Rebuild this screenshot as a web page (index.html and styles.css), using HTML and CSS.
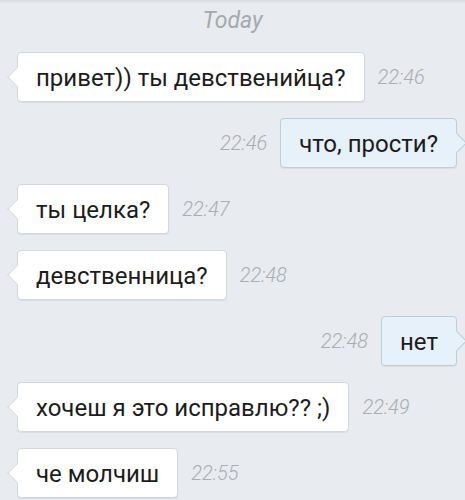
FILE: index.html
```html
<!DOCTYPE html>
<html lang="ru">
<head>
    <meta charset="UTF-8">
    <meta name="viewport" content="width=device-width, initial-scale=1.0">
    <title>Чат</title>
    <link rel="stylesheet" href="styles.css">
</head>
<body>
    <div class="chat">
        <div class="day">Today</div>

        <div class="messages">
            <div class="row in">
                <div class="bubble">привет)) ты девственийца?</div>
                <span class="time">22:46</span>
            </div>
            <div class="row out">
                <span class="time">22:46</span>
                <div class="bubble">что, прости?</div>
            </div>
            <div class="row in">
                <div class="bubble">ты целка?</div>
                <span class="time">22:47</span>
            </div>
            <div class="row in">
                <div class="bubble">девственница?</div>
                <span class="time">22:48</span>
            </div>
            <div class="row out">
                <span class="time">22:48</span>
                <div class="bubble">нет</div>
            </div>
            <div class="row in">
                <div class="bubble">хочеш я это исправлю?? ;)</div>
                <span class="time">22:49</span>
            </div>
            <div class="row in">
                <div class="bubble">че молчиш</div>
                <span class="time">22:55</span>
            </div>
        </div>
    </div>
</body>
</html>
```

FILE: styles.css
```css
body {
    margin: 0;
    padding: 0;
    background-color: #e8ebef;
    font-family: Roboto, "Noto Sans", Arial, sans-serif;
    overflow: hidden;
}

.chat {
    height: 500px;
    background: linear-gradient(#d9dde2, #e8ebef 4px);
}

.day {
    padding-top: 7px;
    height: 29px;
    line-height: 28px;
    text-align: center;
    font-size: 23px;
    font-style: italic;
    color: #a4a9b0;
}

.messages {
    display: flex;
    flex-direction: column;
    gap: 16px;
    margin-top: 16px;
    padding: 0 8px 0 17px;
}

.row {
    display: flex;
    align-items: center;
    gap: 13px;
}

.row.out {
    justify-content: flex-end;
}

.bubble {
    position: relative;
    padding: 12px 18px 10px;
    font-size: 24px;
    line-height: 26px;
    color: #1c1c1c;
    background-color: #fff;
    border: 1px solid #d3d8de;
    border-radius: 4px;
    box-shadow: 0 1px 1px rgba(0, 0, 0, 0.06);
    white-space: nowrap;
}

/* хвостик пузыря */
.bubble::before {
    content: "";
    position: absolute;
    top: 50%;
    width: 13px;
    height: 13px;
    margin-top: -7px;
    background-color: inherit;
    border: 1px solid #d3d8de;
    transform: rotate(45deg);
}

.in .bubble::before {
    left: -8px;
    border-top: none;
    border-right: none;
}

.out .bubble {
    background-color: #e6f1fa;
    border-color: #bccddc;
}

.out .bubble::before {
    right: -8px;
    border-color: #bccddc;
    border-bottom: none;
    border-left: none;
}

.time {
    font-size: 20px;
    font-style: italic;
    font-weight: 300;
    color: #a9aeb5;
}
```
